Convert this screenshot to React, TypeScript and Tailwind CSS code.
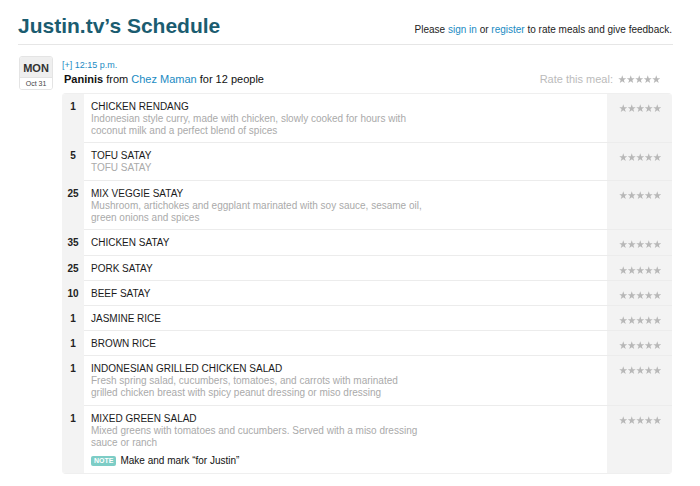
import React from "react";

type Item = { qty: number; name: string; desc: string[]; note?: string; extra?: boolean };

const items: Item[] = [
  {
    qty: 1,
    name: "CHICKEN RENDANG",
    desc: [
      "Indonesian style curry, made with chicken, slowly cooked for hours with",
      "coconut milk and a perfect blend of spices",
    ],
  },
  { qty: 5, name: "TOFU SATAY", desc: ["TOFU SATAY"], extra: true },
  {
    qty: 25,
    name: "MIX VEGGIE SATAY",
    desc: [
      "Mushroom, artichokes and eggplant marinated with soy sauce, sesame oil,",
      "green onions and spices",
    ],
  },
  { qty: 35, name: "CHICKEN SATAY", desc: [], extra: true },
  { qty: 25, name: "PORK SATAY", desc: [] },
  { qty: 10, name: "BEEF SATAY", desc: [] },
  { qty: 1, name: "JASMINE RICE", desc: [] },
  { qty: 1, name: "BROWN RICE", desc: [] },
  {
    qty: 1,
    name: "INDONESIAN GRILLED CHICKEN SALAD",
    desc: [
      "Fresh spring salad, cucumbers, tomatoes, and carrots with marinated",
      "grilled chicken breast with spicy peanut dressing or miso dressing",
    ],
    extra: true,
  },
  {
    qty: 1,
    name: "MIXED GREEN SALAD",
    desc: [
      "Mixed greens with tomatoes and cucumbers. Served with a miso dressing",
      "sauce or ranch",
    ],
    note: "Make and mark \u201Cfor Justin\u201D",
    extra: true,
  },
];

function Stars() {
  const pts =
    "5,0.4 6.2,3.7 9.7,3.8 6.9,5.9 7.9,9.4 5,7.3 2.1,9.4 3.1,5.9 0.3,3.8 3.8,3.7";
  return (
    <svg width="42" height="9" viewBox="0 0 42 9" className="block">
      {[0, 1, 2, 3, 4].map((i) => (
        <g key={i} transform={`translate(${i * 8.5} 0) scale(0.85)`}>
          <polygon points={pts} fill="#b8b8b8" />
        </g>
      ))}
    </svg>
  );
}

export default function App() {
  return (
    <div
      className="w-[700px] h-[486px] bg-white px-[18px] text-[#222]"
      style={{ fontFamily: '"Liberation Sans", Arial, sans-serif' }}
    >
      <div className="flex items-baseline justify-between pt-[13px] pb-[5px] border-b border-[#e6e6e6] mr-[9px]">
        <h1 className="text-[21px] leading-[26px] font-bold text-[#1b5c70]">
          Justin.tv’s Schedule
        </h1>
        <div className="text-[10px] text-[#222] pr-[1px]">
          Please <span className="text-[#1a8bc3]">sign in</span> or{" "}
          <span className="text-[#1a8bc3]">register</span> to rate meals and give feedback.
        </div>
      </div>

      <div className="flex mt-[11px] mr-[10px]">
        <div className="ml-[1px] w-[34px] h-[34px] border border-[#e4e4e4] rounded-[3px] overflow-hidden flex flex-col shrink-0">
          <div className="h-[20px] bg-[#efefef] flex items-center justify-center text-[11px] font-bold text-[#333] leading-none pt-[2px]">
            MON
          </div>
          <div className="flex-1 bg-white flex items-center justify-center text-[7px] text-[#444] leading-none border-t border-[#e4e4e4]">
            Oct 31
          </div>
        </div>

        <div className="flex-1 ml-[9px]">
          <div className="mt-[3px] leading-[12px] text-[9px] text-[#1a8bc3]">[+] 12:15 p.m.</div>
          <div className="flex items-center justify-between leading-[16px]">
            <div className="pl-[2px] text-[11px] text-[#111]">
              <span className="font-bold">Paninis</span> from{" "}
              <span className="text-[#1a8bc3]">Chez Maman</span> for 12 people
            </div>
            <div className="flex items-center pr-[12px] text-[11px] text-[#bbb]">
              <span>Rate this meal:</span>
              <span className="ml-[5px] mt-[1px]">
                <Stars />
              </span>
            </div>
          </div>

          <div className="mt-[6px] rounded-[4px] overflow-hidden border-t border-b border-[#efefef]">
            {items.map((it, idx) => (
              <div key={idx} className="flex">
                <div className="w-[22px] shrink-0 bg-[#f3f3f3] text-center text-[10px] font-bold text-[#222] leading-[12px] pt-[7px]">
                  {it.qty}
                </div>
                <div
                  className={`flex flex-1 ${idx < items.length - 1 ? "border-b border-[#ececec]" : ""}`}
                >
                  <div
                    className={`flex-1 pl-[7px] pr-[6px] pt-[7px] ${it.extra ? "pb-[6px]" : "pb-[5px]"} text-[10px] leading-[12px]`}
                  >
                    <div className="text-[#1a1a1a]">{it.name}</div>
                    {it.desc.map((d, j) => (
                      <div key={j} className="text-[#aaa] whitespace-nowrap">
                        {d}
                      </div>
                    ))}
                    {it.note && (
                      <div className="mt-[6px] flex items-center">
                        <span className="bg-[#7dcdc6] text-white text-[7px] font-bold leading-[10px] px-[3px] rounded-[2px]">
                          NOTE
                        </span>
                        <span className="ml-[4px] text-[10px] text-[#111]">{it.note}</span>
                      </div>
                    )}
                  </div>
                  <div className="w-[65px] shrink-0 bg-[#f3f3f3] pl-[12px] pt-[10px]">
                    <Stars />
                  </div>
                </div>
              </div>
            ))}
          </div>
        </div>
      </div>
    </div>
  );
}
